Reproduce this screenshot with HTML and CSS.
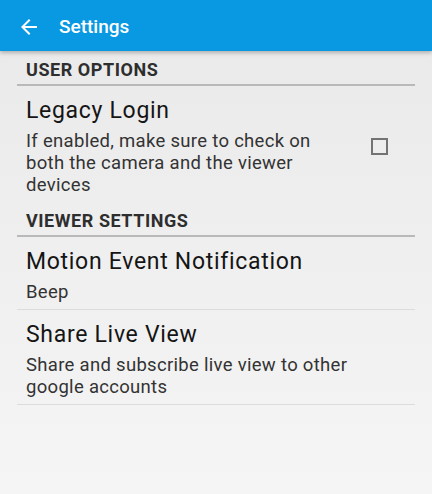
FILE: index.html
```html
<!DOCTYPE html>
<html>
<head>
<meta charset="utf-8">
<link rel="stylesheet" href="styles.css">
</head>
<body>
<header class="appbar">
  <svg class="back" width="24" height="24" viewBox="0 0 24 24"><path fill="#fff" d="M20 11H7.83l5.59-5.59L12 4l-8 8 8 8 1.41-1.41L7.83 13H20v-2z"/></svg>
  <span class="title">Settings</span>
</header>
<main class="list">
  <div class="category">USER OPTIONS</div>
  <div class="item">
    <div class="text">
      <div class="item-title">Legacy Login</div>
      <div class="summary">If enabled, make sure to check on both the camera and the viewer devices</div>
    </div>
    <div class="widget"><div class="checkbox"></div></div>
  </div>
  <div class="category">VIEWER SETTINGS</div>
  <div class="item">
    <div class="text">
      <div class="item-title">Motion Event Notification</div>
      <div class="summary">Beep</div>
    </div>
  </div>
  <div class="item bordered">
    <div class="text">
      <div class="item-title">Share Live View</div>
      <div class="summary">Share and subscribe live view to other google accounts</div>
    </div>
  </div>
</main>
</body>
</html>
```
FILE: styles.css
```css
html, body {
  margin: 0;
  padding: 0;
  height: 100%;
}
body {
  font-family: Roboto, "Liberation Sans", sans-serif;
  background: linear-gradient(#e9e9e9, #f5f5f5);
  min-height: 494px;
}
.appbar {
  height: 51px;
  background: #0999e2;
  display: flex;
  align-items: center;
  padding-left: 17px;
  padding-top: 2px;
  box-sizing: border-box;
  box-shadow: 0 2px 4px rgba(0,0,0,0.25);
  position: relative;
}
.back {
  display: block;
}
.title {
  color: #fff;
  font-size: 19px;
  font-weight: 500;
  margin-left: 18px;
}
.list {
  margin: 0 17px;
}
.category {
  font-size: 18px;
  line-height: 22px;
  font-weight: 700;
  letter-spacing: 0.55px;
  color: #2e2e2e;
  padding: 8px 0 3px 9px;
  border-bottom: 2px solid #b9b9b9;
}
.item {
  display: grid;
  grid-template-columns: 1fr 37px;
  align-items: center;
  padding: 12px 27px 6.5px 9px;
  border-bottom: 1px solid #dcdcdc;
}
.item:has(+ .category) {
  border-bottom: none;
}
.item-title {
  font-size: 23px;
  line-height: 26px;
  letter-spacing: 0.7px;
  color: #151515;
}
.summary {
  font-size: 18.5px;
  line-height: 22px;
  letter-spacing: 0.3px;
  color: #333;
  margin-top: 5.5px;
}
.widget {
  display: flex;
  justify-content: flex-end;
}
.checkbox {
  width: 13px;
  height: 13px;
  border: 2px solid #737373;
}
```
